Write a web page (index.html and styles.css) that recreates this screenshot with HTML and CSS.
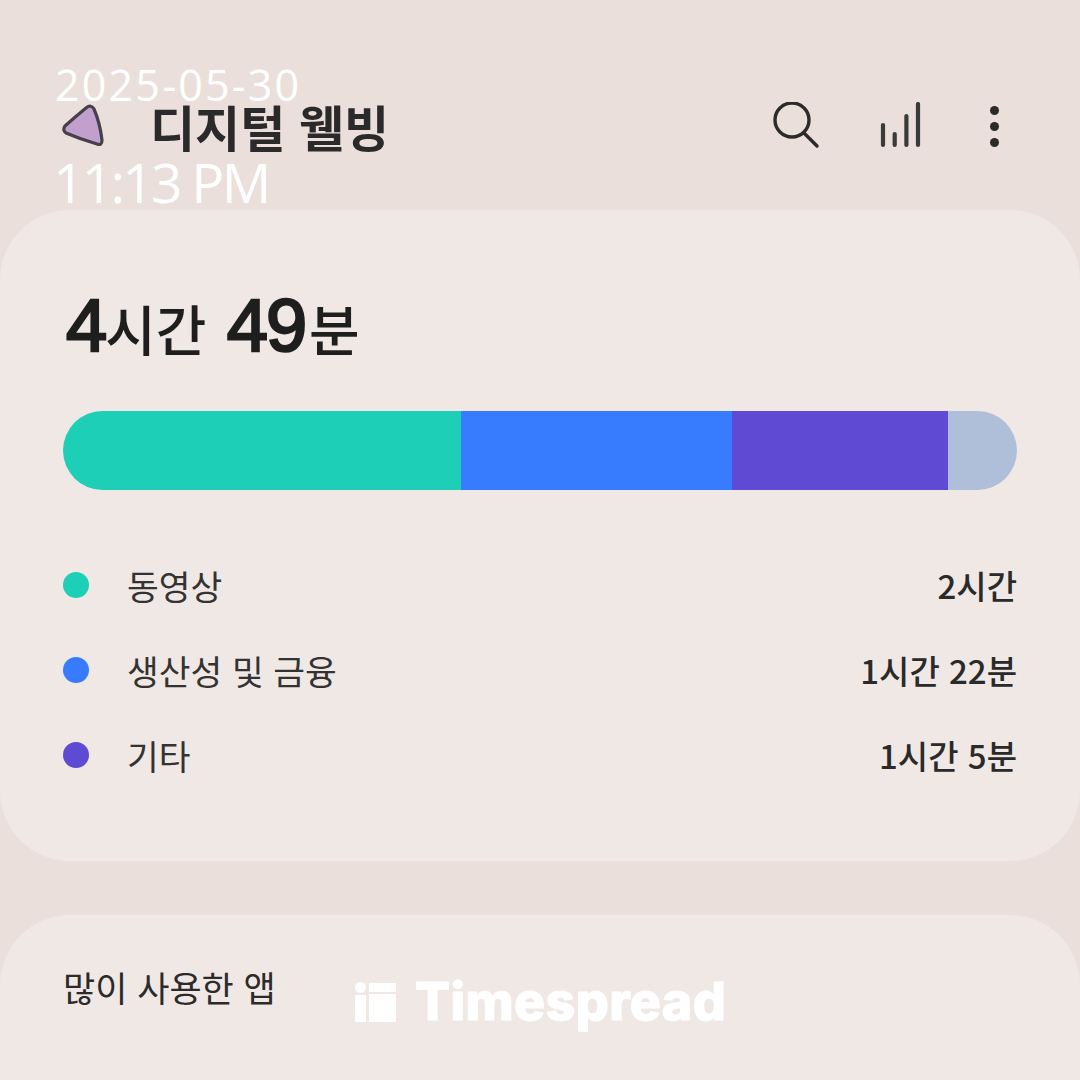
FILE: index.html
```html
<!DOCTYPE html>
<html lang="ko">
<head>
<meta charset="utf-8">
<title>디지털 웰빙</title>
<link rel="stylesheet" href="styles.css">
</head>
<body>
<div class="screen">
  <header class="topbar">
    <div class="title-group">
      <svg class="app-icon" width="46" height="46" viewBox="0 0 46 46"><path d="M26 5 Q31 1 34 6 Q40 20 42 37 Q42 43 37 41 Q20 36 6 30 Q2 27 5 23 Q15 14 26 5Z" fill="#c2a0cd" stroke="#45404a" stroke-width="3.200" stroke-linejoin="round"/></svg>
      <h1 class="title">디지털 웰빙</h1>
    </div>
    <div class="actions">
      <svg class="icon-search" width="48" height="48" viewBox="0 0 48 48"><circle cx="20" cy="18" r="17" fill="none" stroke="#2b2b2b" stroke-width="3.400"/><path d="M32 31 L45 44" stroke="#2b2b2b" stroke-width="3.400" stroke-linecap="round"/></svg>
      <svg class="icon-bars" width="44" height="48" viewBox="0 0 44 48"><path d="M3 23V43M14.700 32V43M26.400 14V43M38 2V43" stroke="#3a3a3a" stroke-width="4.200" stroke-linecap="round"/></svg>
      <div class="icon-more"><span></span><span></span><span></span></div>
    </div>
  </header>
  <section class="card summary">
    <h2 class="total"><b class="first">4</b>시간 <b class="second">49</b>분</h2>
    <div class="bar">
      <div class="seg seg-video"></div>
      <div class="seg seg-prod"></div>
      <div class="seg seg-other"></div>
      <div class="seg seg-rest"></div>
    </div>
    <ul class="legend">
      <li class="row"><i class="dot seg-video"></i><span class="name">동영상</span><span class="time">2시간</span></li>
      <li class="row"><i class="dot seg-prod"></i><span class="name">생산성 및 금융</span><span class="time">1시간 22분</span></li>
      <li class="row"><i class="dot seg-other"></i><span class="name">기타</span><span class="time">1시간 5분</span></li>
    </ul>
  </section>
  <section class="card apps">
    <h3 class="apps-title">많이 사용한 앱</h3>
  </section>
  <div class="stamp">
    <div class="stamp-date">2025-05-30</div>
    <div class="stamp-time">11:13 PM</div>
  </div>
  <div class="brand">
    <svg class="brand-mark" width="42" height="40" viewBox="0 0 42 40"><circle cx="5.500" cy="5.500" r="5.500" fill="#fff"/><rect x="0" y="13" width="11" height="27" fill="#fff"/><rect x="14" y="1" width="27" height="9" fill="#fff"/><rect x="14" y="12" width="27" height="28" fill="#fff"/></svg>
    <span class="brand-name">Timespread</span>
  </div>
</div>
</body>
</html>
```
FILE: styles.css
```css
* { box-sizing: border-box; margin: 0; padding: 0; }
html, body { width: 1080px; height: 1080px; overflow: hidden; }
body { font-family: "Noto Sans CJK KR", "Noto Sans", sans-serif; background: #eadfda; color: #222; }
.screen { position: relative; width: 1080px; height: 1080px; overflow: hidden; }
.topbar { height: 210px; display: flex; align-items: center; justify-content: space-between; padding: 42px 81px 0 60px; }
.title-group { display: flex; align-items: center; gap: 44px; }
.app-icon { display: block; }
.title { font-size: 49px; font-weight: 700; line-height: 60px; color: #2a2a2a; }
.actions { display: flex; align-items: center; gap: 60px; }
.icon-more { display: flex; flex-direction: column; gap: 7px; padding-left: 6px; }
.icon-more span { width: 9px; height: 9px; border-radius: 50%; background: #2b2b2b; }
.card { background: #f0e8e4; border-radius: 70px; }
.summary { height: 651px; padding: 76px 63px 0; }
.total { font-size: 55px; font-weight: 500; line-height: 80px; color: #1e1e1e; }
.total b { font-size: 74px; font-weight: 400; font-family: "Liberation Sans", sans-serif; letter-spacing: -2px; -webkit-text-stroke: 2.500px #1e1e1e; }
.total b.first { margin-left: 3px; }
.total b.second { margin-left: 5px; margin-right: 4px; }
.bar { display: flex; height: 79px; margin-top: 44px; border-radius: 40px; overflow: hidden; }
.seg-video { background: #1dcfb7; }
.seg-prod { background: #377bff; }
.seg-other { background: #5f4bd3; }
.seg-rest { background: #b0bfd9; }
.seg.seg-video { width: 398px; }
.seg.seg-prod { width: 271px; }
.seg.seg-other { width: 216px; }
.seg.seg-rest { flex: 1; }
.legend { list-style: none; margin-top: 73px; display: flex; flex-direction: column; gap: 41px; }
.row { display: flex; align-items: center; height: 44px; font-size: 34.500px; line-height: 44px; }
.dot { width: 26px; height: 26px; border-radius: 50%; margin-right: 38px; }
.name { flex: 1; color: #333; }
.time { font-size: 33px; font-weight: 500; color: #2a2a2a; }
.apps { margin-top: 54px; height: 300px; padding: 46px 63px 0; }
.apps-title { font-size: 35px; font-weight: 400; line-height: 52px; color: #2b2b2b; }
.stamp { position: absolute; left: 53px; top: 59px; color: #fff; font-family: "Open Sans", sans-serif; font-weight: 400; }
.stamp-date { font-size: 43px; line-height: 52px; letter-spacing: 2.200px; margin-left: 2px; }
.stamp-time { font-size: 55px; line-height: 68px; margin-top: 37px; letter-spacing: -2.700px; }
.brand { position: absolute; left: 355px; top: 982px; display: flex; align-items: center; gap: 18px; color: #fff; }
.brand-mark { display: block; }
.brand-name { font-family: Inter, sans-serif; font-weight: 800; font-size: 52px; line-height: 40px; letter-spacing: 0.300px; -webkit-text-stroke: 1px #fff; }
```
